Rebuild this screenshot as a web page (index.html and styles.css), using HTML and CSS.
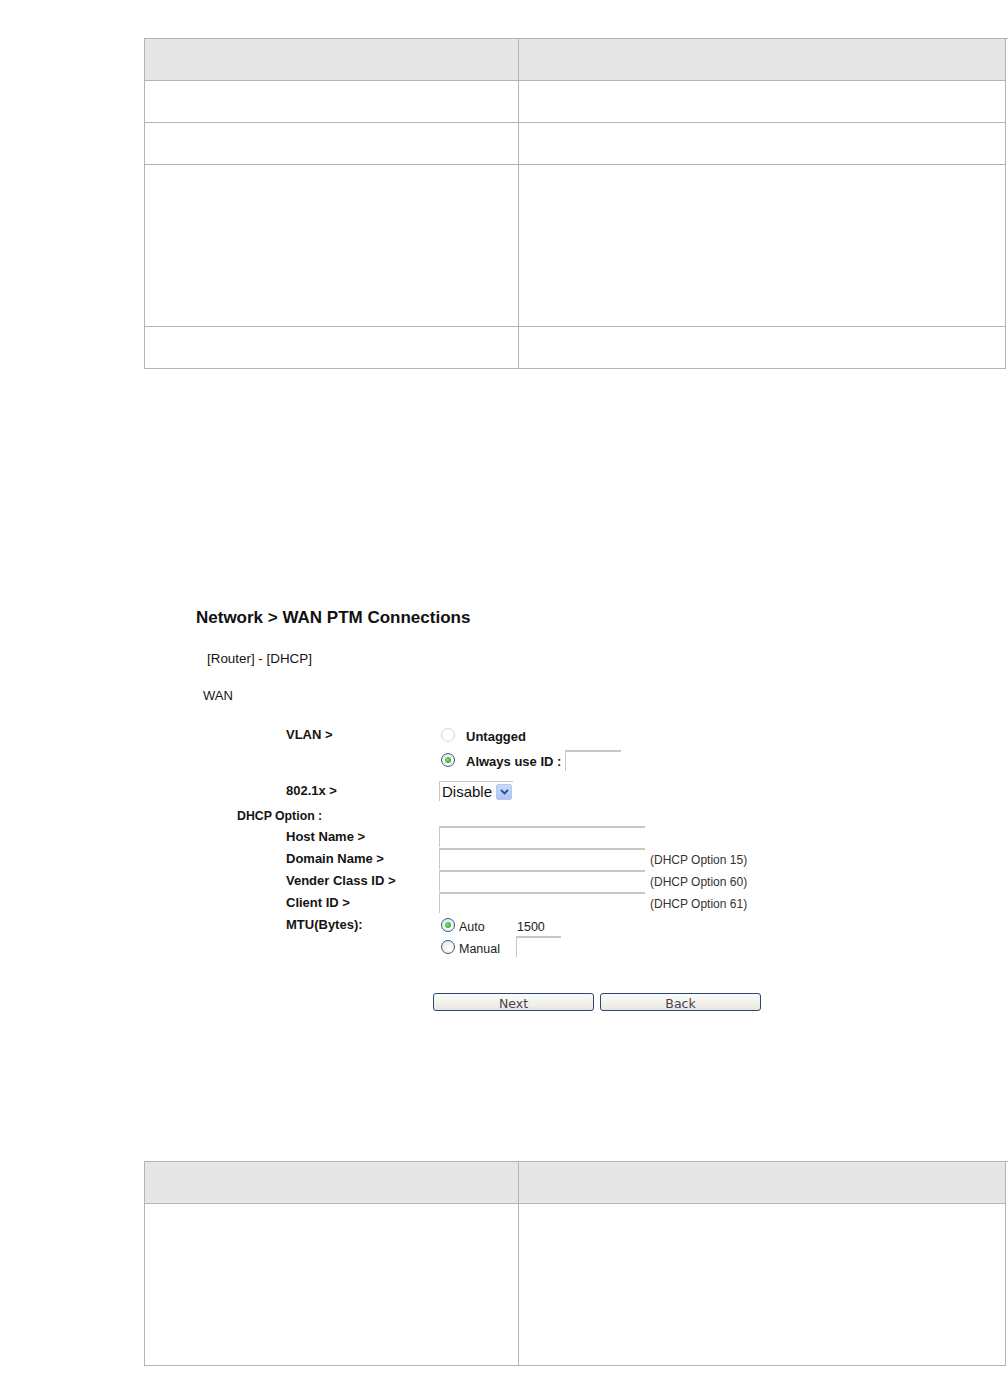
FILE: index.html
```html
<!DOCTYPE html>
<html>
<head>
<meta charset="utf-8">
<link rel="stylesheet" href="styles.css">
</head>
<body>
<div class="page">
  <div class="grid-table">
    <div class="cell head"></div><div class="cell head"></div>
    <div class="cell"></div><div class="cell"></div>
    <div class="cell"></div><div class="cell"></div>
    <div class="cell tall"></div><div class="cell tall"></div>
    <div class="cell"></div><div class="cell"></div>
  </div>

  <div class="shot">
    <div class="title">Network &gt; WAN PTM Connections</div>
    <div class="mode">[Router] - [DHCP]</div>
    <div class="wan">WAN</div>

    <div class="form">
      <div class="row vlan">
        <div class="lbl">VLAN &gt;</div>
        <div class="ctl lines">
          <div class="line"><span class="radio light"></span><span class="btxt">Untagged</span></div>
          <div class="line"><span class="radio on"></span><span class="btxt">Always use ID :</span><span class="field id"></span></div>
        </div>
      </div>
      <div class="row r8021">
        <div class="lbl">802.1x &gt;</div>
        <div class="ctl">
          <div class="select"><span class="sel-text">Disable</span><span class="sel-btn"><svg width="9" height="6" viewBox="0 0 9 6"><path d="M1 1 L4.5 4.5 L8 1" fill="none" stroke="#2a4f9a" stroke-width="1.8"/></svg></span></div>
        </div>
      </div>
      <div class="row dhcp">DHCP Option :</div>
      <div class="row frow">
        <div class="lbl">Host Name &gt;</div>
        <div class="ctl"><span class="field wide"></span></div>
      </div>
      <div class="row frow">
        <div class="lbl">Domain Name &gt;</div>
        <div class="ctl"><span class="field wide"></span><span class="note">(DHCP Option 15)</span></div>
      </div>
      <div class="row frow">
        <div class="lbl">Vender Class ID &gt;</div>
        <div class="ctl"><span class="field wide"></span><span class="note">(DHCP Option 60)</span></div>
      </div>
      <div class="row frow">
        <div class="lbl">Client ID &gt;</div>
        <div class="ctl"><span class="field wide"></span><span class="note">(DHCP Option 61)</span></div>
      </div>
      <div class="row frow">
        <div class="lbl">MTU(Bytes):</div>
        <div class="ctl"><span class="radio on small"></span><span class="ntxt auto">Auto</span><span class="ntxt">1500</span></div>
      </div>
      <div class="row frow">
        <div class="lbl"></div>
        <div class="ctl"><span class="radio dark small"></span><span class="ntxt manual">Manual</span><span class="field mtu"></span></div>
      </div>
      <div class="buttons">
        <span class="btn">Next</span>
        <span class="btn">Back</span>
      </div>
    </div>
  </div>

  <div class="grid-table second">
    <div class="cell head"></div><div class="cell head"></div>
    <div class="cell tall"></div><div class="cell tall"></div>
  </div>
</div>
</body>
</html>
```

FILE: styles.css
```css
html, body {
  margin: 0;
  padding: 0;
  background: #ffffff;
}
body {
  font-family: "Liberation Sans", Arial, sans-serif;
  color: #141414;
}
.page {
  padding: 38px 0 0 144px;
  width: 864px;
}
.grid-table {
  display: grid;
  grid-template-columns: 374px 487px;
  border-top: 1px solid #b4b4b4;
  border-left: 1px solid #b4b4b4;
}
.cell {
  box-sizing: border-box;
  height: 42px;
  border-right: 1px solid #b4b4b4;
  border-bottom: 1px solid #b4b4b4;
  background: #ffffff;
}
.cell.head {
  background: #e6e6e6;
}
.cell.tall {
  height: 162px;
}

.shot {
  height: 792px;
  box-sizing: border-box;
  padding-top: 239px;
}
.title {
  margin-left: 52px;
  font-size: 17px;
  font-weight: bold;
  line-height: 20px;
  color: #111;
}
.mode {
  margin-left: 63px;
  margin-top: 23px;
  font-size: 13.4px;
  line-height: 16px;
}
.wan {
  margin-left: 59px;
  margin-top: 21px;
  font-size: 13px;
  line-height: 16px;
}
.form {
  margin-left: 142px;
  margin-top: 18px;
  font-size: 13px;
  font-weight: bold;
}
.row {
  display: flex;
  align-items: flex-start;
}
.lbl {
  width: 153px;
  flex: none;
}
.ctl {
  display: flex;
  align-items: center;
}
.vlan .lbl {
  line-height: 25px;
}
.lines {
  flex-direction: column;
  align-items: flex-start;
}
.line {
  height: 25px;
  display: flex;
  align-items: center;
}
.btxt {
  font-weight: bold;
  padding-top: 4px;
}
.radio {
  box-sizing: border-box;
  width: 14px;
  height: 14px;
  margin-left: 2px;
  margin-right: 11px;
  border-radius: 50%;
  border: 1px solid #8aa0b4;
  background: radial-gradient(circle at 60% 65%, #ffffff 0%, #eef0ee 60%, #d9dcd6 100%);
  position: relative;
  flex: none;
}
.radio.light {
  border-color: #d2d6da;
  background: #ffffff;
}
.radio.on {
  border-color: #2b5a86;
}
.radio.on::after {
  content: "";
  position: absolute;
  left: 3px;
  top: 3px;
  width: 6px;
  height: 6px;
  border-radius: 50%;
  background: radial-gradient(circle at 40% 40%, #7be07b, #1e9a1e);
}
.radio.dark {
  border-color: #3b5a7a;
}
.radio.small {
  margin-right: 4px;
}
.field {
  box-sizing: border-box;
  height: 21px;
  border-top: 2px solid #cbc8c0;
  border-left: 1px solid #cbc8c0;
  background: #fff;
  display: inline-block;
}
.field.id {
  width: 56px;
  margin-left: 4px;
  margin-top: 2px;
}
.r8021 {
  margin-top: 8px;
  height: 22px;
  align-items: center;
}
.r8021 .lbl {
  line-height: 22px;
}
.select {
  box-sizing: border-box;
  width: 74px;
  height: 20px;
  border-top: 1px solid #c8c6bf;
  border-left: 1px solid #c8c6bf;
  display: flex;
  align-items: center;
  justify-content: space-between;
  padding-left: 2px;
  padding-right: 1px;
}
.sel-text {
  font-weight: normal;
  font-size: 15px;
  color: #111;
  line-height: 18px;
}
.sel-btn {
  box-sizing: border-box;
  width: 16px;
  height: 16px;
  background: linear-gradient(#c9daf8, #adc4f0);
  border: 1px solid #b5c8ee;
  border-radius: 2px;
  display: flex;
  align-items: center;
  justify-content: center;
}
.dhcp {
  margin-top: 4px;
  margin-left: -49px;
  font-size: 12.3px;
  line-height: 20px;
  height: 20px;
}
.frow {
  height: 22px;
}
.frow .lbl {
  line-height: 22px;
}
.frow .ctl {
  height: 22px;
}
.field.wide {
  width: 206px;
  height: 21px;
  align-self: flex-start;
}
.note {
  font-weight: normal;
  font-size: 12px;
  color: #333;
  margin-left: 5px;
  line-height: 22px;
  margin-top: 2px;
}
.ntxt {
  font-weight: normal;
  font-size: 12.5px;
  color: #222;
}
.ntxt.auto {
  width: 58px;
}
.frow .ntxt {
  margin-top: 3px;
}
.ntxt.manual {
  width: 57px;
}
.field.mtu {
  width: 45px;
  margin-top: 0;
  align-self: flex-start;
  margin-left: 0;
}
.buttons {
  display: flex;
  gap: 6px;
  margin-top: 35px;
  margin-left: 147px;
}
.btn {
  box-sizing: border-box;
  width: 161px;
  height: 18px;
  border: 1px solid #2c4870;
  border-radius: 3px;
  background: linear-gradient(#fbfbf9, #efefe9 70%, #e4e4dc);
  font-family: "DejaVu Sans", Verdana, sans-serif;
  font-weight: normal;
  font-size: 12.5px;
  color: #4a4250;
  text-align: center;
  line-height: 20px;
  overflow: hidden;
}
```
